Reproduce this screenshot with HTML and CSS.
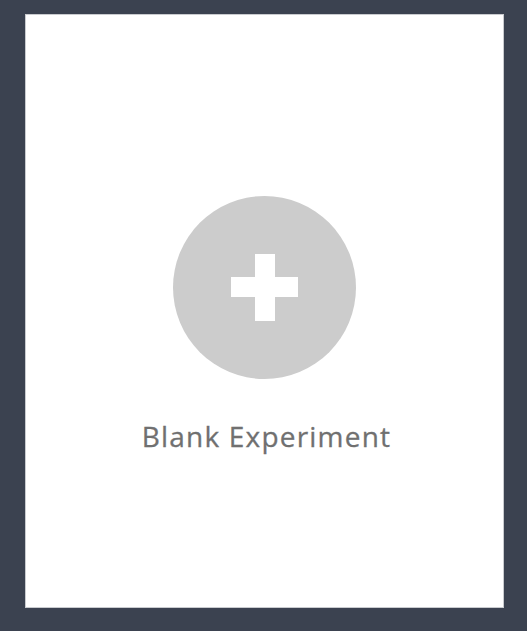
FILE: index.html
```html
<!DOCTYPE html>
<html>
<head>
<meta charset="utf-8">
<link rel="stylesheet" href="styles.css">
</head>
<body>
<div class="card">
  <div class="circle">
    <svg class="plus" width="67" height="67" viewBox="0 0 67 67">
      <rect x="24" y="0" width="20" height="67" fill="#fff"/>
      <rect x="0" y="23" width="67" height="20" fill="#fff"/>
    </svg>
  </div>
  <div class="label">Blank Experiment</div>
</div>
</body>
</html>
```
FILE: styles.css
```css
html, body {
  margin: 0;
  padding: 0;
  background: #3b4250;
  width: 527px;
  height: 631px;
  overflow: hidden;
}
.card {
  box-sizing: border-box;
  margin: 14px 0 0 25px;
  width: 479px;
  height: 594px;
  background: #fff;
  border: 1px solid #c9cbcf;
  display: flex;
  flex-direction: column;
  align-items: center;
  padding-top: 181px;
}
.circle {
  width: 183px;
  height: 183px;
  border-radius: 50%;
  background: #cccccc;
  display: flex;
  align-items: center;
  justify-content: center;
}
.label {
  margin-top: 38px;
  margin-left: 4px;
  font-family: "Open Sans", sans-serif;
  font-size: 28px;
  line-height: 38px;
  letter-spacing: 1.2px;
  color: #707070;
  -webkit-text-stroke: 0.3px #707070;
}
```
